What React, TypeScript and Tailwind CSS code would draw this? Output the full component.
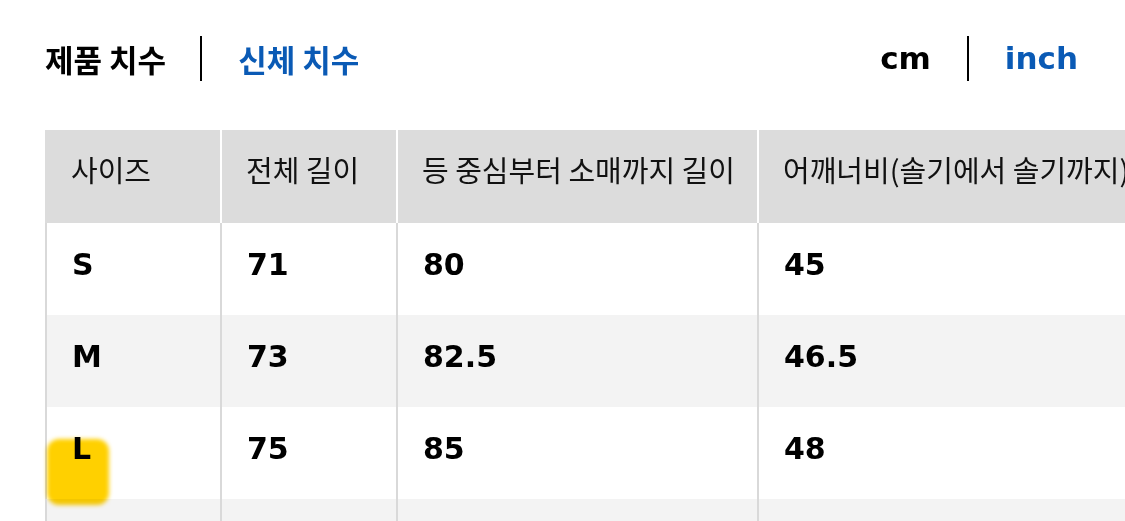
const cols = ["w-[175px]", "w-[176px]", "w-[361px]", "w-[440px]"];

const headers = ["사이즈", "전체 길이", "등 중심부터 소매까지 길이", "어깨너비(솔기에서 솔기까지)"];

const rows = [
  ["S", "71", "80", "45"],
  ["M", "73", "82.5", "46.5"],
  ["L", "75", "85", "48"],
  ["", "", "", ""],
];

export default function App() {
  return (
    <div className="w-full h-[521px] overflow-hidden bg-white text-black">
      {/* 탭 / 단위 */}
      <div className="h-[116px] flex items-center justify-between pl-[45px] pr-[47px]">
        <div className="flex items-center font-['Noto_Sans_CJK_KR',sans-serif] text-[31px] leading-none font-semibold">
          <span>제품 치수</span>
          <div className="w-[2px] h-[45px] bg-black ml-[34px] mr-[36px]" />
          <span className="text-[#0a5ab5]">신체 치수</span>
        </div>
        <div className="flex items-center font-['DejaVu_Sans',sans-serif] text-[31px] leading-none font-bold">
          <span>cm</span>
          <div className="w-[2px] h-[45px] bg-black ml-[36px] mr-[36px]" />
          <span className="text-[#0a5ab5]">inch</span>
        </div>
      </div>

      {/* 사이즈 표 */}
      <div className="mt-[14px] ml-[45px] w-max">
        <div className="flex h-[93px] bg-[#dcdcdc] font-['Noto_Sans_CJK_KR',sans-serif] text-[29px] leading-none text-[#111]">
          {headers.map((h, i) => (
            <div
              key={h}
              className={`${cols[i]} shrink-0 pt-[25px] pl-[24px] whitespace-nowrap border-l-2 ${i === 0 ? "border-[#dcdcdc]" : "border-white"}`}
            >
              {h}
            </div>
          ))}
        </div>
        {rows.map((r, ri) => (
          <div
            key={ri}
            className={`flex h-[92px] font-['DejaVu_Sans',sans-serif] text-[30px] leading-none font-bold ${ri % 2 === 1 ? "bg-[#f3f3f3]" : "bg-white"}`}
          >
            {r.map((c, i) => (
              <div
                key={i}
                className={`${cols[i]} shrink-0 relative pt-[27px] pl-[25px] border-l-2 border-[#d9d9d9]`}
              >
                {c === "L" && (
                  <div className="absolute left-0 top-[32px] w-[62px] h-[66px] rounded-[12px] bg-[#ffd000] blur-[2px] mix-blend-multiply" />
                )}
                {c && <span className="relative">{c}</span>}
              </div>
            ))}
          </div>
        ))}
      </div>
    </div>
  );
}
